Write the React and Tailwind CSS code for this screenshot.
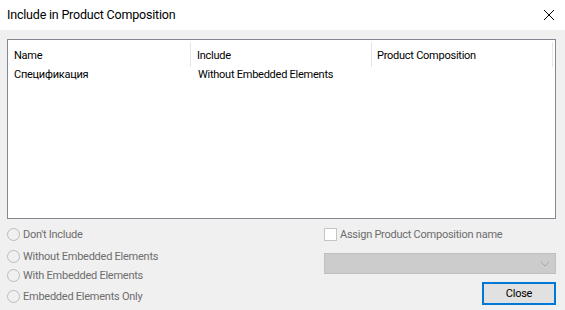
import React from "react";

const font = { fontFamily: 'Roboto, "Noto Sans", sans-serif' };

function Radio({ label, className }) {
  return (
    <div className={"flex items-center h-[20px] " + className}>
      <span className="w-[13px] h-[13px] rounded-full border border-[#bcbcbc] bg-[#f0f0f0] mr-[3px]" />
      <span className="text-[#6d6d6d] leading-none">{label}</span>
    </div>
  );
}

export default function App() {
  return (
    <div className="w-[565px] h-[310px] flex flex-col overflow-hidden text-[11px] tracking-[-0.25px] text-black" style={font}>
      <div className="h-[30px] bg-white flex items-center justify-between pl-[7px] pr-[8px]">
        <span className="text-[12.5px] tracking-[-0.2px] leading-none">Include in Product Composition</span>
        <svg width="12" height="12" viewBox="0 0 12 12" className="mr-[2px]">
          <path d="M1 1 L11 11 M11 1 L1 11" stroke="#000" strokeWidth="1" fill="none" />
        </svg>
      </div>
      <div className="flex-1 bg-[#f0f0f0] flex flex-col px-[7px] pt-[9px]">
        <div className="h-[180px] w-[549px] border border-[#828790] bg-white flex flex-col">
          <div className="h-[27px] flex pt-[2px]">
            <div className="w-[183px] flex items-center pt-[4px] pl-[6px] border-r border-[#e5e5e5]">Name</div>
            <div className="w-[181px] flex items-center pt-[4px] pl-[6px] border-r border-[#e5e5e5]">Include</div>
            <div className="w-[181px] flex items-center pt-[4px] pl-[5px] border-r border-[#e5e5e5]">Product Composition</div>
          </div>
          <div className="h-[14px] mt-[1px] flex items-center">
            <div className="w-[184px] pl-[6px]">Спецификация</div>
            <div className="w-[181px] pl-[6px]">Without Embedded Elements</div>
          </div>
        </div>
        <div className="flex w-[549px]">
          <div className="w-[317px] flex flex-col">
            <Radio label="Don't Include" className="mt-[5px]" />
            <Radio label="Without Embedded Elements" className="mt-[2px]" />
            <Radio label="With Embedded Elements" className="mt-[-1px]" />
            <Radio label="Embedded Elements Only" className="mt-[1px]" />
          </div>
          <div className="flex-1 flex flex-col">
            <div className="flex items-center h-[20px] mt-[5px]">
              <span className="w-[13px] h-[13px] border border-[#c4c4c4] bg-white mr-[3px]" />
              <span className="text-[#6d6d6d] leading-none">Assign Product Composition name</span>
            </div>
            <div className="mt-[9px] h-[21px] bg-[#cccccc] border border-[#bfbfbf] flex items-center justify-end pr-[5px]">
              <svg width="10" height="6" viewBox="0 0 10 6">
                <path d="M0.5 0.5 L5 5 L9.5 0.5" stroke="#a8a8a8" strokeWidth="1" fill="none" />
              </svg>
            </div>
            <div className="flex justify-end mt-[8px]">
              <button className="w-[74px] h-[23px] border-2 border-[#0078d7] bg-[#e1e1e1] flex items-center justify-center leading-none text-black">Close</button>
            </div>
          </div>
        </div>
      </div>
    </div>
  );
}
